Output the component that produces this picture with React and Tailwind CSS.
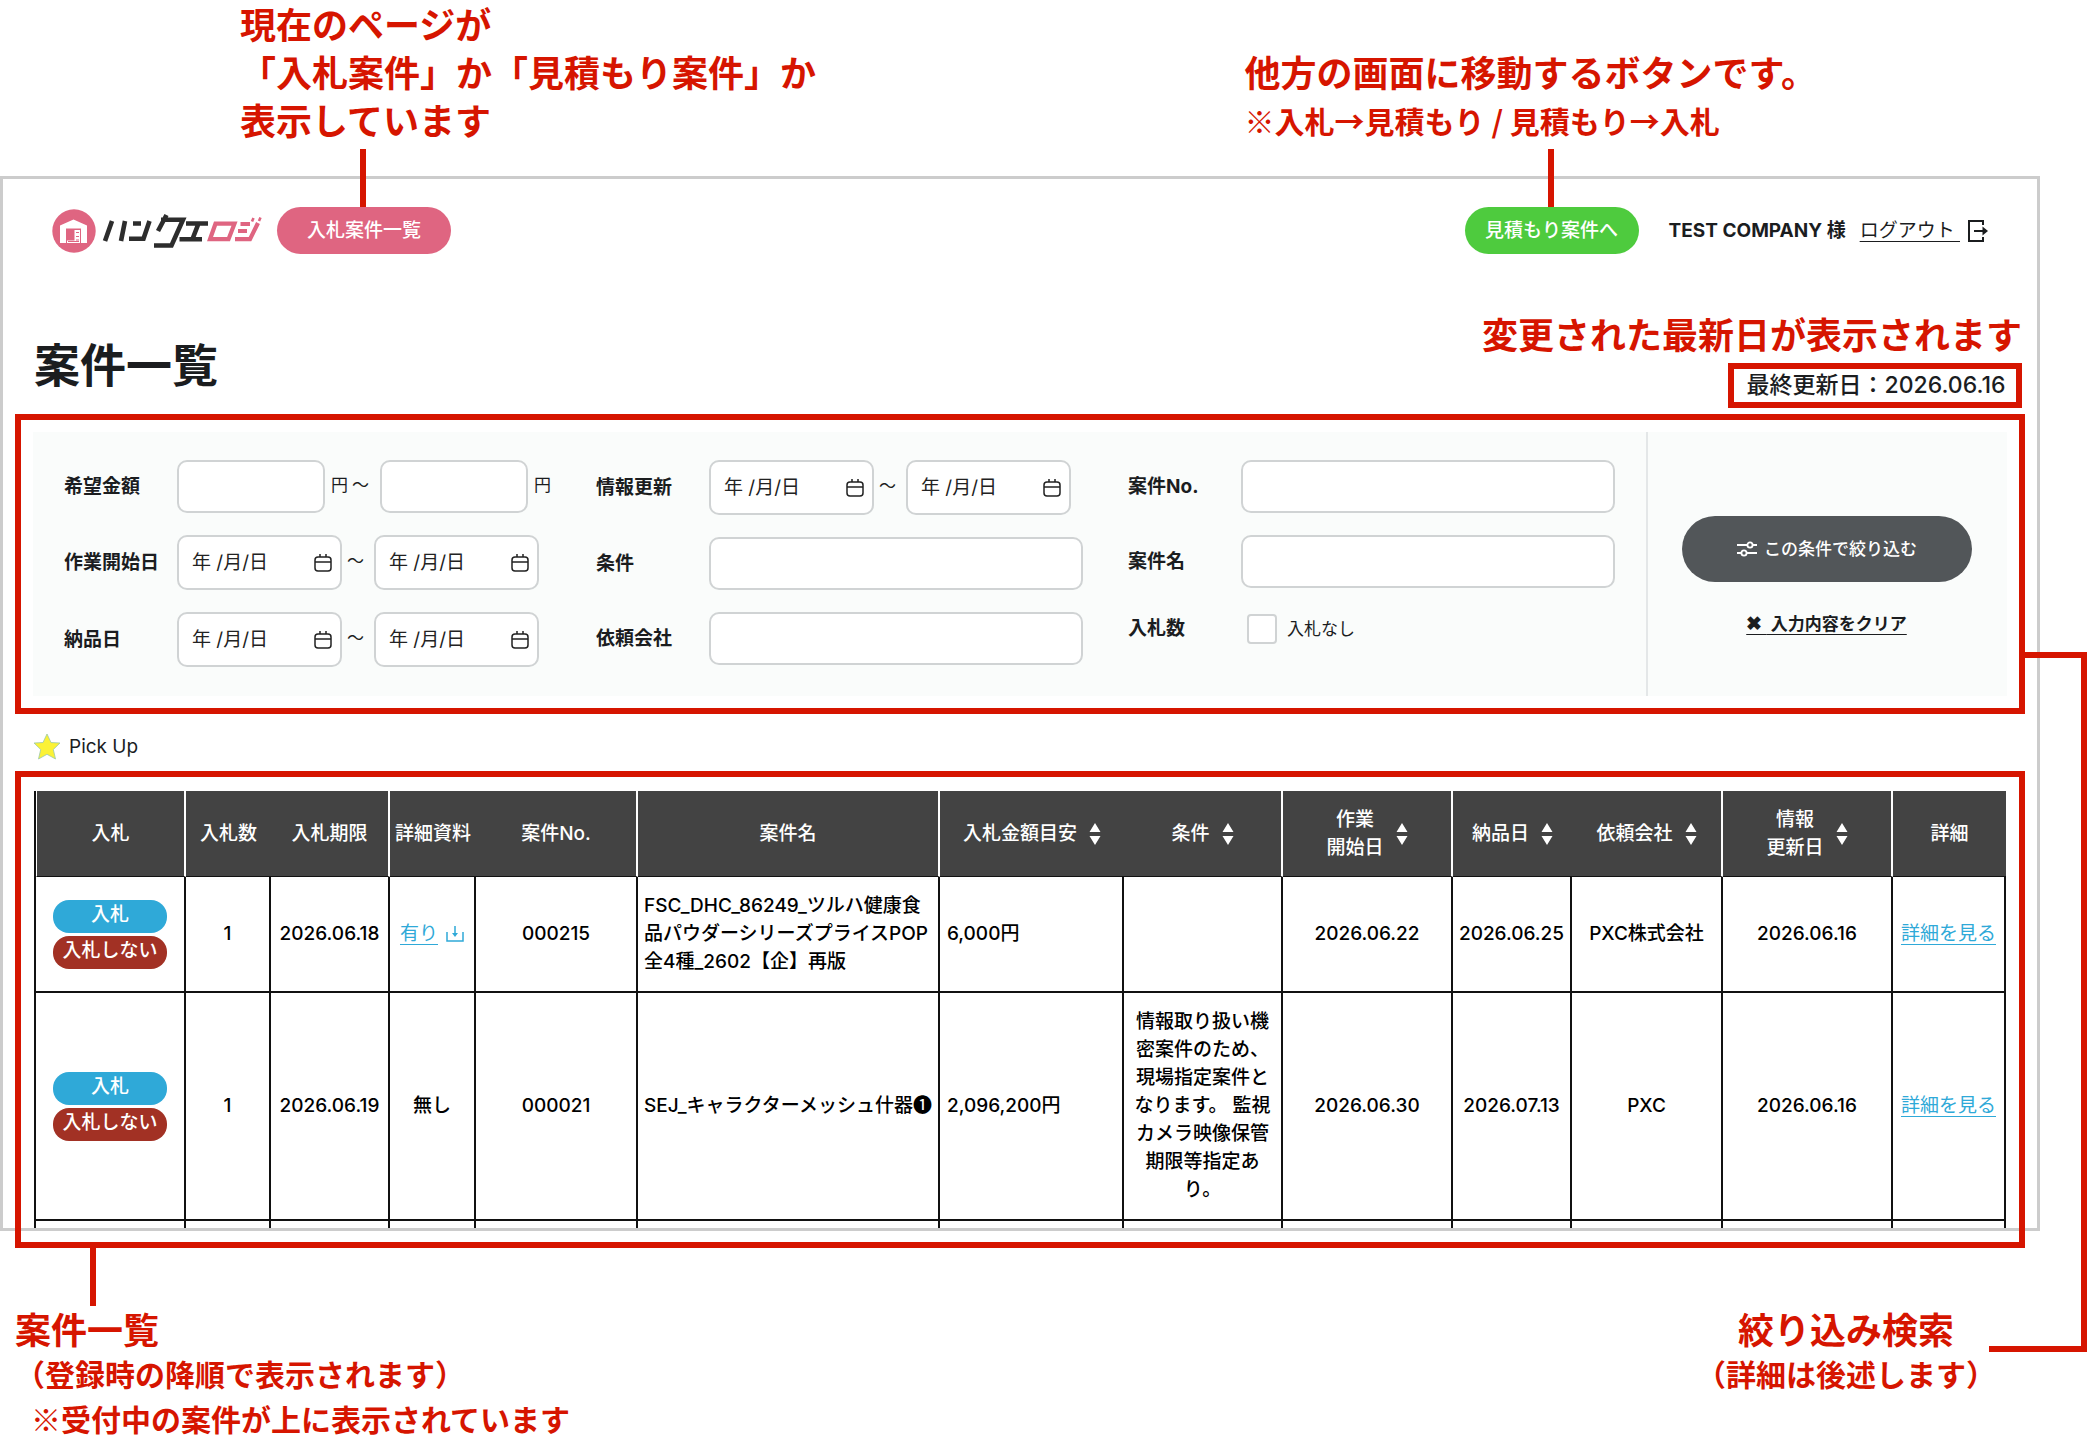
import React from "react";

const NOTE = "font-['Noto_Sans_CJK_JP',sans-serif] font-bold text-[#d61500]";

function Logo() {
  return (
    <svg viewBox="0 0 212 44" className="h-11 w-[212px] shrink-0" role="img" aria-label="ハンクエロジ">
      <circle cx="22" cy="22" r="21.7" fill="#df6581" />
      <path d="M8 34V16.5L21.5 10.5 35 16.5V34H29V19.5H14V34Z" fill="#fff" />
      <path d="M22.5 21H28V34H15V31.5H22.5Z" fill="#fff" />
      <path d="M24 23.5H27M24 27.5H27M16 32.5H27M24 31H27" stroke="#df6581" strokeWidth="1.2" />
      <g fill="none" stroke="#2d2d2d" strokeWidth="4.6">
        <path d="M60 12 53 32M73 12 69 32" />
        <path d="M81 14.500H89M77 29.800H91.500L97.500 12" />
        <path d="M114.500 6 106 22M109 10.700H131L119.500 36.500H102" />
        <path d="M134 14.500H156M146.500 14.500 140.500 30M127.500 30.300H150" />
      </g>
      <g fill="none" stroke="#df6581" strokeWidth="4.200">
        <path d="M163.500 14.700H182.500L176.500 30.200H158Z" />
        <path d="M188.500 15H198M186 22H195M183 30.200H198L206 14" />
        <path d="M201.500 9 200 12.500M208.500 8.500 207 12" strokeWidth="2.600" />
      </g>
    </svg>
  );
}

function LogoutIcon() {
  return (
    <svg viewBox="0 0 22 24" className="h-6 w-[22px]" fill="none" stroke="#1b1d1f" strokeWidth="2" aria-hidden="true">
      <path d="M17 6V2H3V22H17V18" />
      <path d="M8 12H18" />
      <path d="M16.500 7.500 22 12 16.500 16.500Z" fill="#1b1d1f" stroke="none" />
    </svg>
  );
}

function CalendarIcon() {
  return (
    <svg viewBox="0 0 18 18" className="h-[18px] w-[18px]" fill="none" stroke="#222" strokeWidth="1.500" aria-hidden="true">
      <rect x="1" y="3" width="16" height="14" rx="3" />
      <path d="M1 8H17M6 0V3M12 0V3" />
    </svg>
  );
}

function SlidersIcon() {
  return (
    <svg viewBox="0 0 22 16" className="h-4 w-[22px]" fill="none" stroke="#fff" strokeWidth="1.800" aria-hidden="true">
      <path d="M1 4H11M17 4H21M1 12H5M11 12H21" />
      <circle cx="14" cy="4" r="2.600" />
      <circle cx="8" cy="12" r="2.600" />
    </svg>
  );
}

function DownloadIcon() {
  return (
    <svg viewBox="0 0 18 16" className="h-4 w-[18px]" fill="none" stroke="#2fa9d8" strokeWidth="1.500" aria-hidden="true">
      <path d="M1 6V15H17V6M9 0V9" />
      <path d="M6 7H12L9 11Z" fill="#2fa9d8" stroke="none" />
    </svg>
  );
}

function Star() {
  return (
    <svg viewBox="0 0 28 27" className="h-[27px] w-7" aria-hidden="true">
      <path
        d="M14 1 18 9.500 27 10 20.300 16.500 22.500 26 14 21.300 5.500 26 7.700 16.500 1 10 10 9.500Z"
        fill="#fbf236"
        stroke="#9cc9a8"
        strokeWidth="0.800"
      />
    </svg>
  );
}

const box = "rounded-[10px] border-2 border-[#d0d3d4] bg-white";

function TextBox({ id, label, className }) {
  return (
    <input id={id} aria-label={label} type="text" className={`h-[53px] min-w-0 ${box} px-3 text-[19px] ${className}`} />
  );
}

function DateBox({ id, label }) {
  return (
    <span className={`flex h-[55px] w-[165px] shrink-0 items-center ${box} pr-2 pl-[13px]`}>
      <input
        id={id}
        aria-label={label}
        type="text"
        placeholder="年 /月/日"
        className="w-0 min-w-0 grow bg-transparent text-[19px] placeholder:text-[#222]"
      />
      <button type="button" aria-label="カレンダーを開く">
        <CalendarIcon />
      </button>
    </span>
  );
}

function DateRange({ id, label }) {
  return (
    <div className="flex items-center">
      <DateBox id={id} label={label} />
      <span className="w-8 shrink-0 pb-1 pl-[5px] text-[17px]">～</span>
      <DateBox id={`${id}-to`} label={`${label}（終了）`} />
    </div>
  );
}

function Row({ id, label, className = "", children }) {
  return (
    <div className={`flex items-center ${className}`}>
      <label htmlFor={id} className="w-[113px] shrink-0 text-[19px] leading-7 font-bold">
        {label}
      </label>
      {children}
    </div>
  );
}

const columns = [
  { label: ["入札"], width: "w-[150px]", line: true },
  { label: ["入札数"], width: "w-[85px]" },
  { label: ["入札期限"], width: "w-[119px]", line: true },
  { label: ["詳細資料"], width: "w-[86px]" },
  { label: ["案件No."], width: "w-[162px]", line: true },
  { label: ["案件名"], width: "w-[302px]", line: true },
  { label: ["入札金額目安"], width: "w-[184px]", sort: true },
  { label: ["条件"], width: "w-[159px]", sort: true, line: true },
  { label: ["作業", "開始日"], width: "w-[170px]", sort: true, line: true },
  { label: ["納品日"], width: "w-[119px]", sort: true },
  { label: ["依頼会社"], width: "w-[151px]", sort: true, line: true },
  { label: ["情報", "更新日"], width: "w-[170px]", sort: true, line: true },
  { label: ["詳細"], width: "w-[113px]" },
];

const rows = [
  {
    height: "h-[116px]",
    doc: true,
    due: "2026.06.18",
    no: "000215",
    name: "FSC_DHC_86249_ツルハ健康食品パウダーシリーズプライスPOP全4種_2602【企】再版",
    price: "6,000円",
    cond: "",
    start: "2026.06.22",
    delivery: "2026.06.25",
    company: "PXC株式会社",
    updated: "2026.06.16",
  },
  {
    height: "h-[228px]",
    doc: false,
    due: "2026.06.19",
    no: "000021",
    name: "SEJ_キャラクターメッシュ什器❶",
    price: "2,096,200円",
    cond: "情報取り扱い機密案件のため、現場指定案件となります。 監視カメラ映像保管期限等指定あり。",
    start: "2026.06.30",
    delivery: "2026.07.13",
    company: "PXC",
    updated: "2026.06.16",
  },
];

function SortIcon() {
  return (
    <svg viewBox="0 0 12 22" className="h-[22px] w-3" fill="#fff" aria-hidden="true">
      <path d="M6 0 11.500 9H0.500ZM6 22 11.500 13H0.500Z" />
    </svg>
  );
}

function HeaderCell({ col }) {
  const text = (
    <span className="whitespace-nowrap">
      {col.label.map((l) => (
        <span key={l} className="block">
          {l}
        </span>
      ))}
    </span>
  );
  return (
    <th
      scope="col"
      className={`h-[86px] border-b border-b-[#111] p-0 font-medium first:border-l first:border-l-white ${col.width} ${
        col.line ? "border-r-2 border-r-white" : ""
      }`}
    >
      {col.sort ? (
        <button type="button" className="mx-auto flex items-center justify-center gap-3">
          {text}
          <SortIcon />
        </button>
      ) : (
        text
      )}
    </th>
  );
}

const td = "border-r-2 border-b-2 border-[#111] p-0";

export default function App() {
  return (
    <div className="relative w-full min-w-[1900px] bg-white font-['Inter','Noto_Sans_CJK_JP',sans-serif] text-[19px] leading-7 text-[#1b1d1f]">
      <div className={`flex h-44 items-end justify-between pr-[270px] pb-[33px] pl-60 ${NOTE}`}>
        <p className="text-4xl leading-[48px]">
          現在のページが
          <br />
          「入札案件」か「見積もり案件」か
          <br />
          表示しています
        </p>
        <div>
          <p className="text-4xl leading-[48px]">他方の画面に移動するボタンです。</p>
          <p className="pt-0.5 text-3xl leading-[46px]">※入札→見積もり / 見積もり→入札</p>
        </div>
      </div>

      <div className="relative mr-[47px] h-[1055px] border-[3px] border-[#ccc]">
        <header className="flex items-center justify-between pt-7 pr-[49px] pl-[49px]">
          <div className="flex items-center gap-[13px]">
            <Logo />
            <div className="relative">
              <span className="absolute -top-[58px] left-[83px] h-[58px] w-1.5 bg-[#d61500]" />
              <span className="flex h-[47px] w-[174px] items-center justify-center rounded-3xl bg-[#df6581] font-medium text-white">
                入札案件一覧
              </span>
            </div>
          </div>
          <div className="flex items-center">
            <div className="relative mr-[30px]">
              <span className="absolute -top-[58px] left-[83px] h-[58px] w-1.5 bg-[#d61500]" />
              <button
                type="button"
                className="flex h-[47px] w-[174px] items-center justify-center rounded-3xl bg-[#4ecb3e] font-medium text-white"
              >
                見積もり案件へ
              </button>
            </div>
            <span className="mr-[14px] font-bold">TEST COMPANY 様</span>
            <a href="#logout" className="flex items-center gap-1.5">
              <span className="whitespace-pre underline underline-offset-4">ログアウト </span>
              <LogoutIcon />
            </a>
          </div>
        </header>

        <div className="flex items-end justify-between pt-[57px] pr-[15px] pl-[31px]">
          <h1 className="pb-2 text-[46px] leading-[70px] font-bold">案件一覧</h1>
          <div className="flex flex-col items-end">
            <p className={`pb-2 text-4xl leading-[44px] ${NOTE}`}>変更された最新日が表示されます</p>
            <p className="flex h-[45px] w-[294px] items-center justify-center border-[6px] border-[#d61500] pb-0.5 pl-0.5 text-[23px] font-medium">
              最終更新日：2026.06.16
            </p>
          </div>
        </div>

        <form className="mt-1.5 mr-3 ml-3 border-[6px] border-[#d61500] p-3" onSubmit={(e) => e.preventDefault()}>
          <div className="flex h-[264px] bg-[#fafcfb]">
            <div className="flex grow justify-between pt-7 pr-[31px] pl-[31px]">
              <div className="flex w-[487px] flex-col gap-[22px]">
                <Row id="amount" label="希望金額" className="h-[53px]">
                  <TextBox id="amount" className="w-[148px] shrink-0" />
                  <span className="flex w-[55px] shrink-0 gap-1 pb-1 pl-1.5 text-[17px]">
                    <span>円</span>
                    <span>～</span>
                  </span>
                  <TextBox id="amount-to" label="希望金額（上限）" className="w-[148px] shrink-0" />
                  <span className="shrink-0 pb-1 pl-1.5 text-[17px]">円</span>
                </Row>
                <Row id="work" label="作業開始日">
                  <DateRange id="work" label="作業開始日" />
                </Row>
                <Row id="delivery" label="納品日">
                  <DateRange id="delivery" label="納品日" />
                </Row>
              </div>
              <div className="flex w-[487px] flex-col gap-[22px]">
                <Row id="updated" label="情報更新">
                  <DateRange id="updated" label="情報更新" />
                </Row>
                <Row id="cond" label="条件">
                  <TextBox id="cond" className="grow" />
                </Row>
                <Row id="company" label="依頼会社">
                  <TextBox id="company" className="grow" />
                </Row>
              </div>
              <div className="flex w-[487px] flex-col gap-[22px]">
                <Row id="case-no" label="案件No.">
                  <TextBox id="case-no" className="grow" />
                </Row>
                <Row id="case-name" label="案件名">
                  <TextBox id="case-name" className="grow" />
                </Row>
                <div className="flex items-center pt-1">
                  <label htmlFor="no-bids" className="w-[119px] text-[19px] font-bold">
                    入札数
                  </label>
                  <label className="flex items-center gap-2.5 text-[17px]">
                    <input
                      id="no-bids"
                      type="checkbox"
                      className="h-[30px] w-[30px] appearance-none rounded-sm border-2 border-[#d0d3d4] bg-white"
                    />
                    入札なし
                  </label>
                </div>
              </div>
            </div>
            <div className="flex w-[361px] shrink-0 flex-col items-center gap-7 border-l-2 border-[#e4e7e8] pt-[84px] pr-0.5">
              <button
                type="submit"
                className="flex h-[66px] w-[290px] items-center justify-center gap-1.5 rounded-[33px] bg-[#525659] text-[17px] font-medium text-white"
              >
                <SlidersIcon />
                この条件で絞り込む
              </button>
              <button type="reset" className="text-[17px] font-bold whitespace-pre underline underline-offset-4">
                <span className="text-[19px]">✖ </span> 入力内容をクリア
              </button>
            </div>
          </div>
        </form>

        <p className="flex h-[57px] items-center gap-2 pt-2 pl-[30px] text-[19px]">
          <Star />
          Pick Up
        </p>

        <section className="relative h-[457px] px-[31px] pt-5">
          <div className="pointer-events-none absolute inset-x-3 top-0 -bottom-5 z-10 border-[6px] border-[#d61500]" />
          <div className="h-full overflow-hidden">
            <table className="w-full table-fixed border-separate border-spacing-0 border-l-2 border-[#111] text-center font-medium text-black">
              <thead>
                <tr className="bg-[#434343] text-white">
                  {columns.map((col) => (
                    <HeaderCell key={col.label.join("")} col={col} />
                  ))}
                </tr>
              </thead>
              <tbody>
                {rows.map((r) => (
                  <tr key={r.no} className={r.height}>
                    <td className={td}>
                      <div className="flex flex-col items-center gap-[3px]">
                        <button type="button" className="h-[33px] w-[114px] rounded-2xl bg-[#2fa9d8] pb-0.5 text-white">
                          入札
                        </button>
                        <button type="button" className="h-[33px] w-[114px] rounded-2xl bg-[#a23124] pb-0.5 text-white">
                          入札しない
                        </button>
                      </div>
                    </td>
                    <td className={td}>1</td>
                    <td className={td}>{r.due}</td>
                    <td className={td}>
                      {r.doc ? (
                        <a href="#doc" className="flex items-center justify-center gap-2 font-normal text-[#2fa9d8]">
                          <span className="underline underline-offset-4">有り</span>
                          <DownloadIcon />
                        </a>
                      ) : (
                        "無し"
                      )}
                    </td>
                    <td className={td}>{r.no}</td>
                    <td className={`${td} pl-1.5 text-left`}>{r.name}</td>
                    <td className={`${td} pl-[7px] text-left`}>{r.price}</td>
                    <td className={`${td} px-[9px]`}>{r.cond}</td>
                    <td className={td}>{r.start}</td>
                    <td className={td}>{r.delivery}</td>
                    <td className={td}>{r.company}</td>
                    <td className={td}>{r.updated}</td>
                    <td className={td}>
                      <a href="#detail" className="font-normal text-[#2fa9d8] underline underline-offset-4">
                        詳細を見る
                      </a>
                    </td>
                  </tr>
                ))}
                <tr className="h-10">
                  {columns.map((col) => (
                    <td key={col.label.join("")} className={td} />
                  ))}
                </tr>
              </tbody>
            </table>
          </div>
        </section>

        <div className="pointer-events-none absolute top-[473px] -right-[50px] h-[700px] w-[65px] border-t-[6px] border-r-[6px] border-[#d61500]" />
        <div className="pointer-events-none absolute top-[1167px] -right-[50px] h-1.5 w-[98px] bg-[#d61500]" />
      </div>

      <footer className={`flex items-end justify-between pr-[91px] pl-[15px] ${NOTE}`}>
        <div>
          <div className="mt-[17px] ml-[75px] h-[58px] w-1.5 bg-[#d61500]" />
          <p className="text-4xl leading-[44px]">案件一覧</p>
          <p className="text-3xl leading-[46px]">（登録時の降順で表示されます）</p>
          <p className="pl-4 text-3xl leading-[44px]">※受付中の案件が上に表示されています</p>
        </div>
        <div className="pb-[44px] text-center">
          <p className="text-4xl leading-[44px]">絞り込み検索</p>
          <p className="text-3xl leading-[46px]">（詳細は後述します）</p>
        </div>
      </footer>
    </div>
  );
}
